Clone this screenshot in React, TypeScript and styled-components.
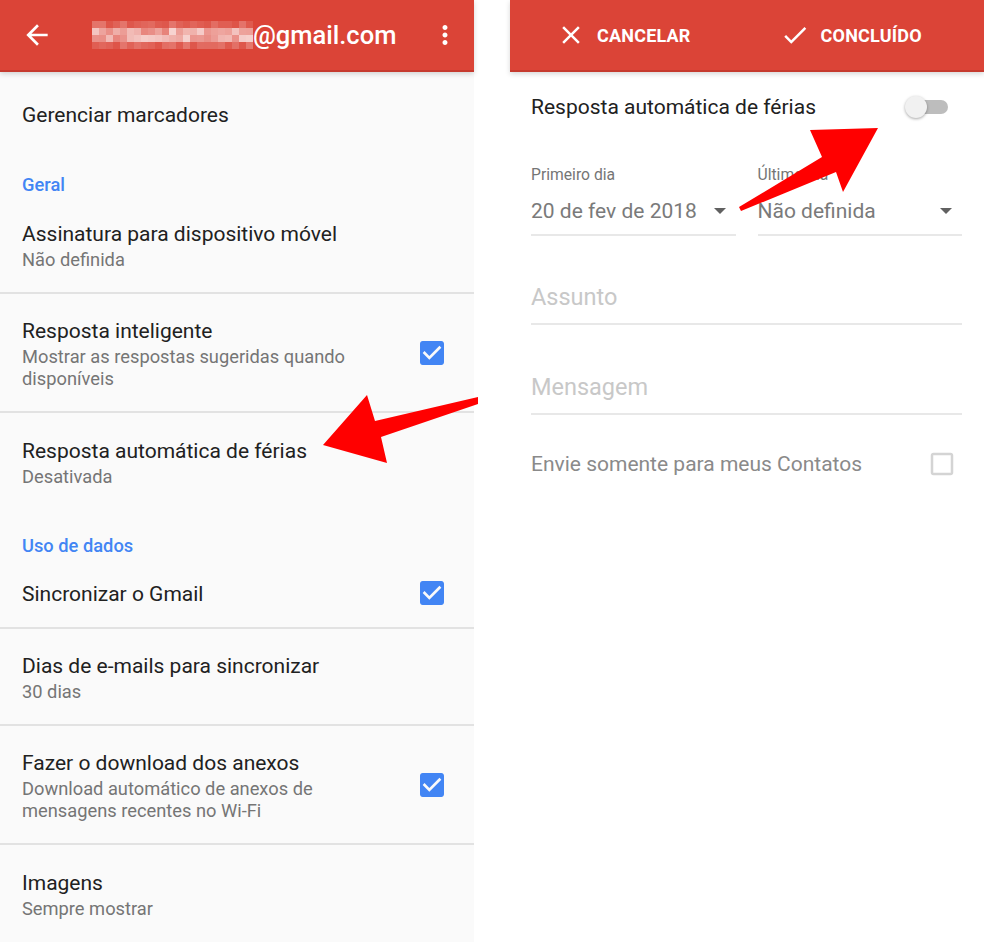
import React from 'react';
import styled, { createGlobalStyle } from 'styled-components';

const RED = '#db4437';
const BLUE = '#4285f4';

const GlobalStyle = createGlobalStyle`
  html, body { margin: 0; padding: 0; background: #fff; }
  body { font-family: Roboto, "Noto Sans", "Liberation Sans", sans-serif; -webkit-font-smoothing: antialiased; }
`;

const Page = styled.div`
  position: relative;
  display: flex;
  gap: 36px;
  width: 984px;
  height: 942px;
  overflow: hidden;
`;

const Panel = styled.div<{ $bg: string }>`
  width: 474px;
  height: 100%;
  background: ${(p) => p.$bg};
  display: flex;
  flex-direction: column;
`;

const AppBar = styled.header`
  position: relative;
  z-index: 1;
  flex: none;
  box-sizing: border-box;
  height: 72px;
  background: ${RED};
  border-bottom: 2px solid #c63a2e;
  box-shadow: 0 2px 5px rgba(0, 0, 0, 0.16);
  display: flex;
  align-items: center;
  color: #fff;
`;

const LeftBar = styled(AppBar)`
  padding: 0 14px 0 21px;
`;

const RightBar = styled(AppBar)`
  padding-left: 46px;
  gap: 89px;
`;

const Title = styled.span`
  font-size: 25.5px;
  font-weight: 500;
`;

const Mosaic = styled.svg`
  display: block;
  margin-left: 39px;
  flex: none;
`;

const BarIcon = styled.svg`
  display: block;
  flex: none;
  fill: #fff;
`;

const Overflow = styled(BarIcon)`
  margin-left: auto;
`;

const BarButton = styled.div`
  display: flex;
  align-items: center;
  gap: 11px;
  font-size: 18px;
  font-weight: 700;
  letter-spacing: 0.2px;
  text-transform: uppercase;
`;

/* ---------- left list ---------- */

const List = styled.div`
  padding-top: 6px;
`;

const Row = styled.div<{ $h: number; $divider?: boolean }>`
  box-sizing: border-box;
  height: ${(p) => p.$h}px;
  display: flex;
  align-items: center;
  justify-content: space-between;
  padding: 0 26px 0 22px;
  border-bottom: ${(p) => (p.$divider ? '2px solid #e2e2e2' : 'none')};
`;

const TextBlock = styled.div`
  display: flex;
  flex-direction: column;
  padding-top: 2px;
`;

const ItemTitle = styled.div`
  font-size: 21px;
  line-height: 26px;
  color: #212121;
`;

const ItemSubs = styled.div`
  margin-top: 2px;
`;

const ItemSub = styled.div`
  font-size: 18.3px;
  line-height: 22px;
  color: #757575;
`;

const Section = styled.div`
  box-sizing: border-box;
  height: 48px;
  display: flex;
  align-items: flex-end;
  padding: 0 22px 1px;
  font-size: 18.3px;
  line-height: 22px;
  font-weight: 500;
  color: ${BLUE};
`;

const CheckIcon = styled.svg<{ $color: string }>`
  display: block;
  flex: none;
  fill: ${(p) => p.$color};
`;

/* ---------- right form ---------- */

const ToggleRow = styled.div`
  height: 70px;
  display: flex;
  align-items: center;
  justify-content: space-between;
  padding: 0 36px 0 21px;
  font-size: 21px;
  color: #212121;
`;

const Toggle = styled.div`
  position: relative;
  width: 43px;
  height: 22px;
`;

const Track = styled.div`
  position: absolute;
  right: 0;
  top: 4px;
  width: 38px;
  height: 14px;
  border-radius: 7px;
  background: #bdbdbd;
`;

const Thumb = styled.div`
  position: absolute;
  left: 0;
  top: 0;
  width: 22px;
  height: 22px;
  border-radius: 50%;
  background: #f1f1f1;
  box-shadow: 0 1px 3px rgba(0, 0, 0, 0.35);
`;

const DateGrid = styled.div`
  display: grid;
  grid-template-columns: 1fr 1fr;
  gap: 22px;
  padding: 23px 22px 0 21px;
`;

const DateField = styled.div`
  border-bottom: 2px solid #e8e8e8;
  padding-bottom: 8px;
`;

const FieldLabel = styled.div`
  font-size: 15.7px;
  line-height: 20px;
  color: #757575;
`;

const DateValue = styled.div`
  margin-top: 11px;
  display: flex;
  align-items: center;
  justify-content: space-between;
  font-size: 21px;
  line-height: 30px;
  color: #7a7a7a;
  padding-right: 10px;
`;

const Caret = styled.span`
  width: 0;
  height: 0;
  border-left: 6px solid transparent;
  border-right: 6px solid transparent;
  border-top: 6px solid #616161;
`;

const FieldWrap = styled.div<{ $top: number }>`
  margin-top: ${(p) => p.$top}px;
  padding: 0 22px 0 21px;
`;

const TextField = styled.div`
  font-size: 23.5px;
  line-height: 30px;
  color: #c8c8c8;
  padding-bottom: 11px;
  border-bottom: 2px solid #e8e8e8;
`;

const ContactsRow = styled.div`
  margin-top: 34px;
  display: flex;
  align-items: center;
  justify-content: space-between;
  padding: 0 27px 0 21px;
  font-size: 21px;
  color: #8a8a8a;
`;

const Overlay = styled.svg`
  position: absolute;
  left: 0;
  top: 0;
  pointer-events: none;
`;

/* ---------- icons ---------- */

const BackArrow = () => (
  <BarIcon width="32" height="32" viewBox="0 0 24 24">
    <path d="M20 11H7.83l5.59-5.59L12 4l-8 8 8 8 1.41-1.41L7.83 13H20v-2z" />
  </BarIcon>
);

const MoreVert = () => (
  <Overflow width="30" height="30" viewBox="0 0 24 24">
    <path d="M12 8c1.1 0 2-.9 2-2s-.9-2-2-2-2 .9-2 2 .9 2 2 2zm0 2c-1.1 0-2 .9-2 2s.9 2 2 2 2-.9 2-2-.9-2-2-2zm0 6c-1.1 0-2 .9-2 2s.9 2 2 2 2-.9 2-2-.9-2-2-2z" />
  </Overflow>
);

const CloseIcon = () => (
  <BarIcon width="30" height="30" viewBox="0 0 24 24">
    <path d="M19 6.41L17.59 5 12 10.59 6.41 5 5 6.41 10.59 12 5 17.59 6.41 19 12 13.41 17.59 19 19 17.59 13.41 12z" />
  </BarIcon>
);

const DoneIcon = () => (
  <BarIcon width="30" height="30" viewBox="0 0 24 24">
    <path d="M9 16.17L4.83 12l-1.42 1.41L9 19 21 7l-1.41-1.41z" />
  </BarIcon>
);

const Checked = () => (
  <CheckIcon $color={BLUE} width="32" height="32" viewBox="0 0 24 24">
    <path d="M19 3H5c-1.11 0-2 .9-2 2v14c0 1.1.89 2 2 2h14c1.11 0 2-.9 2-2V5c0-1.1-.89-2-2-2zm-9 14l-5-5 1.41-1.41L10 14.17l7.59-7.59L19 8l-9 9z" />
  </CheckIcon>
);

const Unchecked = () => (
  <CheckIcon $color="#d4d4d4" width="30" height="30" viewBox="0 0 24 24">
    <path d="M19 5v14H5V5h14m0-2H5c-1.1 0-2 .9-2 2v14c0 1.1.9 2 2 2h14c1.1 0 2-.9 2-2V5c0-1.1-.9-2-2-2z" />
  </CheckIcon>
);

// pixelated e-mail user name
const mosaicCells = (() => {
  const cells: { x: number; y: number; o: number }[] = [];
  let seed = 17;
  const rnd = () => {
    seed = (seed * 9301 + 49297) % 233280;
    return seed / 233280;
  };
  for (let r = 0; r < 4; r++) {
    for (let c = 0; c < 23; c++) {
      const mid = r === 1 || r === 2;
      const base = mid ? 0.32 : 0.08;
      const span = mid ? 0.45 : 0.2;
      cells.push({ x: c * 7, y: r * 7, o: base + rnd() * span });
    }
  }
  return cells;
})();

const EmailMosaic = () => (
  <Mosaic width="161" height="28" viewBox="0 0 161 28">
    {mosaicCells.map((c, i) => (
      <rect key={i} x={c.x} y={c.y} width="7" height="7" fill="#fff" fillOpacity={c.o} />
    ))}
  </Mosaic>
);

type Item = {
  title: string;
  sub?: string[];
  checked?: boolean;
  h: number;
  divider?: boolean;
};

const SettingRow = ({ item }: { item: Item }) => (
  <Row $h={item.h} $divider={item.divider}>
    <TextBlock>
      <ItemTitle>{item.title}</ItemTitle>
      {item.sub && (
        <ItemSubs>
          {item.sub.map((s) => (
            <ItemSub key={s}>{s}</ItemSub>
          ))}
        </ItemSubs>
      )}
    </TextBlock>
    {item.checked && <Checked />}
  </Row>
);

const App: React.FC = () => {
  return (
    <>
      <GlobalStyle />
      <Page>
        <Panel $bg="#fafafa">
          <LeftBar>
            <BackArrow />
            <EmailMosaic />
            <Title>@gmail.com</Title>
            <MoreVert />
          </LeftBar>
          <List>
            <SettingRow item={{ title: 'Gerenciar marcadores', h: 71 }} />
            <Section>Geral</Section>
            <SettingRow item={{ title: 'Assinatura para dispositivo móvel', sub: ['Não definida'], h: 97, divider: true }} />
            <SettingRow
              item={{
                title: 'Resposta inteligente',
                sub: ['Mostrar as respostas sugeridas quando', 'disponíveis'],
                checked: true,
                h: 119,
                divider: true,
              }}
            />
            <SettingRow item={{ title: 'Resposta automática de férias', sub: ['Desativada'], h: 97 }} />
            <Section>Uso de dados</Section>
            <SettingRow item={{ title: 'Sincronizar o Gmail', checked: true, h: 71, divider: true }} />
            <SettingRow item={{ title: 'Dias de e-mails para sincronizar', sub: ['30 dias'], h: 97, divider: true }} />
            <SettingRow
              item={{
                title: 'Fazer o download dos anexos',
                sub: ['Download automático de anexos de', 'mensagens recentes no Wi-Fi'],
                checked: true,
                h: 119,
                divider: true,
              }}
            />
            <SettingRow item={{ title: 'Imagens', sub: ['Sempre mostrar'], h: 97 }} />
          </List>
        </Panel>

        <Panel $bg="#fff">
          <RightBar>
            <BarButton>
              <CloseIcon />
              Cancelar
            </BarButton>
            <BarButton>
              <DoneIcon />
              Concluído
            </BarButton>
          </RightBar>
          <ToggleRow>
            Resposta automática de férias
            <Toggle>
              <Track />
              <Thumb />
            </Toggle>
          </ToggleRow>
          <DateGrid>
            <DateField>
              <FieldLabel>Primeiro dia</FieldLabel>
              <DateValue>
                20 de fev de 2018
                <Caret />
              </DateValue>
            </DateField>
            <DateField>
              <FieldLabel>Último dia</FieldLabel>
              <DateValue>
                Não definida
                <Caret />
              </DateValue>
            </DateField>
          </DateGrid>
          <FieldWrap $top={46}>
            <TextField>Assunto</TextField>
          </FieldWrap>
          <FieldWrap $top={47}>
            <TextField>Mensagem</TextField>
          </FieldWrap>
          <ContactsRow>
            Envie somente para meus Contatos
            <Unchecked />
          </ContactsRow>
        </Panel>

        <Overlay width="984" height="942" viewBox="0 0 984 942">
          <polygon
            fill="#ff0000"
            points="323,445 367,395 375,421 478,397 478,404 381,437 387,463"
          />
          <polygon
            fill="#ff0000"
            points="739,207 822,157 810,130 878,128 843,192 836,172 741,211"
          />
        </Overlay>
      </Page>
    </>
  );
};

export default App;
